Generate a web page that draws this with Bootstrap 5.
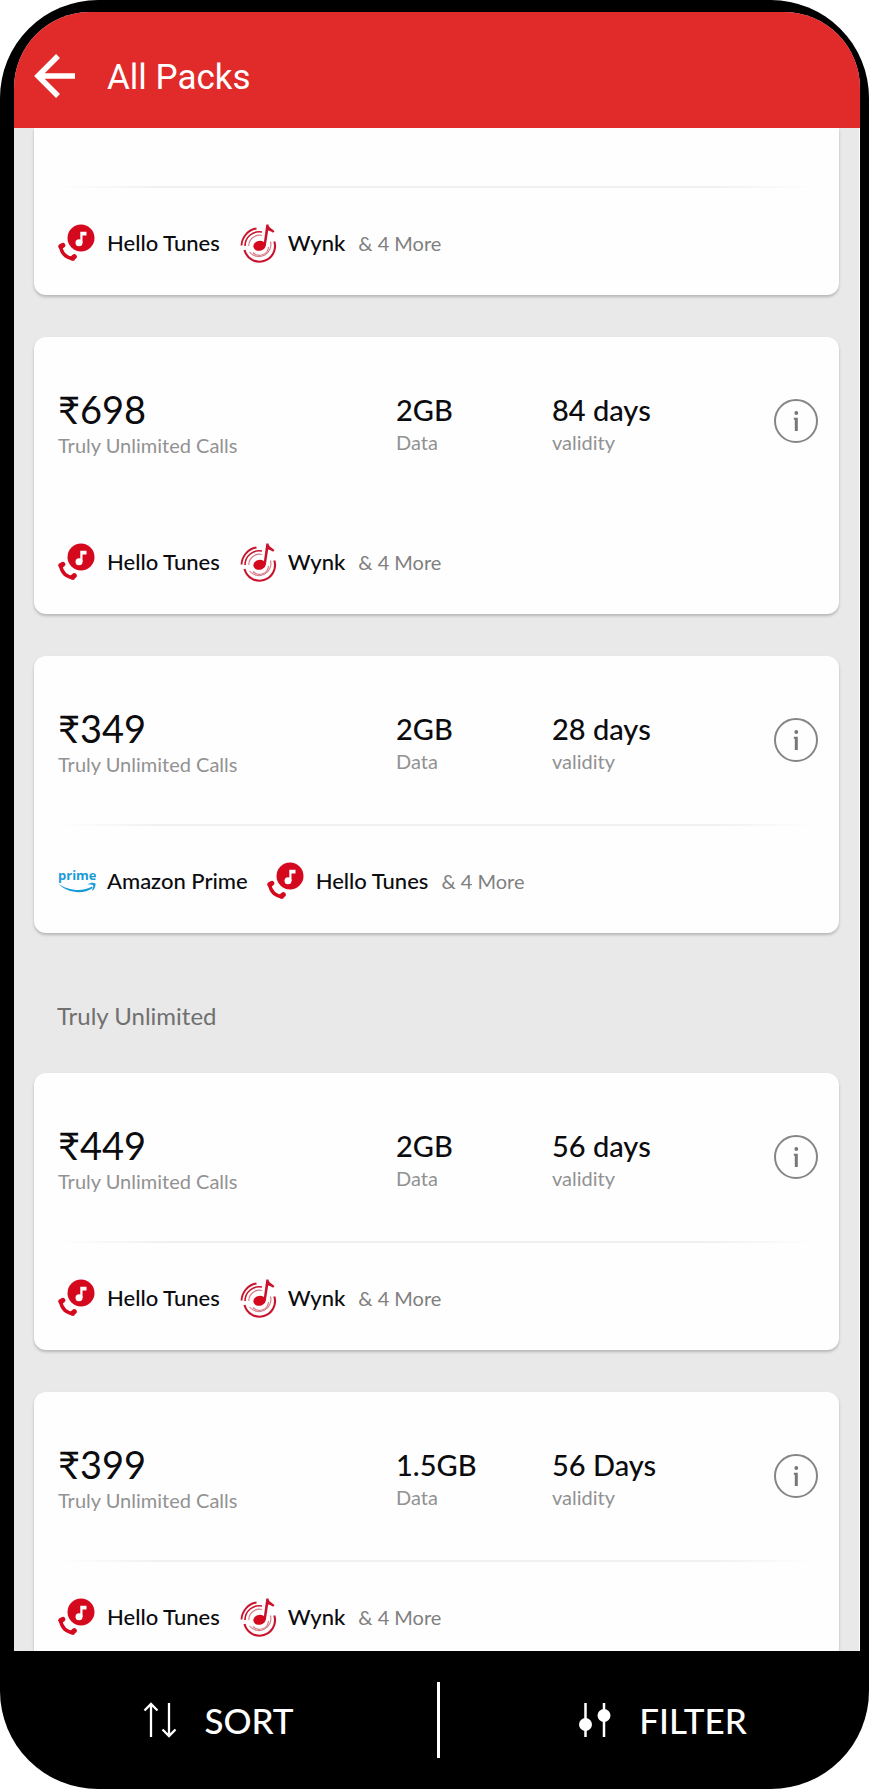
<!DOCTYPE html>
<html lang="en">
<head>
<meta charset="utf-8">
<meta name="viewport" content="width=device-width, initial-scale=1">
<title>All Packs</title>
<link href="https://cdn.jsdelivr.net/npm/bootstrap@5.3.0/dist/css/bootstrap.min.css" rel="stylesheet">
<style>
  body { background: #fff; font-family: Lato, "Liberation Sans", sans-serif; color: #0c0c0f; }
  .phone { height: 100vh; background: #000; border-radius: 98px; overflow: hidden; }
  .screen { min-height: 0; margin: 12px 9px 0 14px; border-radius: 76px 76px 0 0; background: #e9e9e9; overflow: hidden; }
  .topbar { background: #e12a2a; height: 116px; padding: 12px 20px 0 20px; gap: 31px; }
  .topbar h1 { font: 400 35px/44px Roboto, sans-serif; color: #fff; padding-top: 4px; }
  .back { width: 42px; height: 46px; }
  .packs { min-height: 0; padding: 0 20px; gap: 42px; overflow-y: auto; scrollbar-width: none; border-right: 1px solid #fff; }
  .packs::-webkit-scrollbar { display: none; }
  .pack { flex: none; background: #fefefe; border-radius: 12px; box-shadow: 0 2px 3px rgba(0,0,0,.22); }
  .pack-cut { border-radius: 0 0 12px 12px; padding-top: 58px; }
  .plan { display: grid; grid-template-columns: 338fr 156fr 222fr 44px; height: 168px; padding: 50px 21px 0 24px; }
  .price { font-size: 38px; line-height: 44px; }
  .value { font-size: 29px; line-height: 36px; padding-top: 5px; font-weight: 500; }
  .note { font-size: 20px; line-height: 28px; color: #929292; }
  .info { width: 44px; height: 44px; margin-top: 12px; }
  .rule { height: 2px; margin: 0 24px; background: linear-gradient(90deg, transparent, #f0f0f0 14%, #f0f0f0 86%, transparent); }
  .rule-none { background: none; }
  .perks { height: 107px; padding: 3px 24px 0; gap: 19px; font-size: 22px; line-height: 28px; font-weight: 500; }
  .perk { gap: 11px; }
  .perk svg { width: 38px; height: 40px; }
  .more { color: #808080; font-size: 20px; font-weight: 400; margin-left: -6px; }
  .group-title { font-size: 24px; line-height: 30px; color: #707070; padding: 26px 0 0 23px; }
  .actions { height: 138px; display: grid; grid-template-columns: 437fr 3px 429fr; align-items: center; }
  .actions button { font-size: 35px; line-height: 44px; font-weight: 500; color: #fff; gap: 27px; }
  .actions .filter { padding: 0 0 0 16px; }
  .split { height: 76px; background: #fff; }
</style>
</head>
<body>
<svg class="d-none" aria-hidden="true">
  <symbol id="tunes" viewBox="0 0 38 40">
    <circle cx="23" cy="15" r="13.500" fill="#d5091d"/>
    <path d="M22.300 20V8.800h6.200v3.600h-4V20z" fill="#fff"/><circle cx="21" cy="19.800" r="3.500" fill="#fff"/>
    <path d="M2.500 23C3.500 30.500 8.500 35.200 16.500 36" fill="none" stroke="#d5091d" stroke-width="3.400"/>
    <path d="M2.800 23.500l2-1.200M14.500 35.200l1.800-1.600" fill="none" stroke="#d5091d" stroke-width="5" stroke-linecap="round"/>
  </symbol>
  <symbol id="wynk" viewBox="0 0 38 40">
    <g fill="none" stroke="#c9122b">
      <path d="M2.500 22.500A18 18 0 0 1 17.500 5.500" stroke-width="1.900"/>
      <path d="M35.300 18.500A15.500 15.500 0 1 1 5.500 27" stroke-width="2.100"/>
      <path d="M6 23A14.300 14.300 0 0 1 23 9" stroke-width="1.600"/>
      <path d="M31.500 18.500A12 12 0 0 1 10.500 29" stroke-width="1.200" stroke="#d8808b"/>
      <path d="M9.800 23A10.800 10.800 0 0 1 23 12.500" stroke-width="1.200" stroke="#d8808b"/>
      <path d="M29.500 24A9 9 0 0 1 14 29.500" stroke-width="1.200" stroke="#d8808b"/>
    </g>
    <path d="M24.500 22L27.300 1.500h2.200c.3 3.500 3.500 3.800 6 6.800l-1.500 1.500c-2-1.500-3.500-2-4.800-2.300L26.800 23z" fill="#c9122b"/>
    <ellipse cx="20.500" cy="22.800" rx="6.200" ry="5" fill="#d5091d" transform="rotate(-12 20.500 22.800)"/>
  </symbol>
  <symbol id="prime" viewBox="0 0 38 40">
    <text x="0" y="19" font-family="Open Sans, sans-serif" font-weight="700" font-size="13" fill="#1a9bd7">prime</text>
    <path d="M0 22.500C10 30 25 31 34 25.500l.8 1.500C25 34 9 32 0 22.500zM29.500 23.500c3-2.200 6.500-2 8-1 .2 3-.8 5.500-2.800 7.200l-.6-.6c1-2 1.500-3.800 1-4.800-1.200-.8-3.200-.8-5.600-.8z" fill="#1a9bd7"/>
  </symbol>
  <symbol id="info" viewBox="0 0 44 44">
    <circle cx="22" cy="22" r="21" fill="none" stroke="#858585" stroke-width="2"/>
    <circle cx="22.300" cy="14" r="1.900" fill="#777"/><path d="M19.800 18.800h4V32h-3V20.800h-1z" fill="#777"/>
  </symbol>
</svg>

<div class="phone d-flex flex-column">
  <div class="screen d-flex flex-column flex-grow-1">
    <header class="topbar d-flex align-items-center flex-shrink-0">
      <button class="btn p-0 border-0 d-flex" type="button" aria-label="Back">
        <svg class="back" viewBox="0 0 42 46" fill="none" stroke="#fff" stroke-width="5.500"><path d="M24 3L4 23l20 20M4 23h37"/></svg>
      </button>
      <h1 class="m-0">All Packs</h1>
    </header>

    <main class="packs d-flex flex-column flex-grow-1">
      <article class="pack pack-cut">
        <div class="rule"></div>
        <div class="perks d-flex align-items-center">
          <span class="perk d-flex align-items-center"><svg><use href="#tunes"/></svg>Hello Tunes</span>
          <span class="perk d-flex align-items-center"><svg><use href="#wynk"/></svg>Wynk</span>
          <span class="more">&amp; 4 More</span>
        </div>
      </article>

      <article class="pack">
        <div class="plan">
          <div><div class="price">₹698</div><div class="note">Truly Unlimited Calls</div></div>
          <div><div class="value">2GB</div><div class="note">Data</div></div>
          <div><div class="value">84 days</div><div class="note">validity</div></div>
          <button class="info btn p-0 border-0 d-flex" type="button" aria-label="Pack details"><svg width="44" height="44"><use href="#info"/></svg></button>
        </div>
        <div class="rule rule-none"></div>
        <div class="perks d-flex align-items-center">
          <span class="perk d-flex align-items-center"><svg><use href="#tunes"/></svg>Hello Tunes</span>
          <span class="perk d-flex align-items-center"><svg><use href="#wynk"/></svg>Wynk</span>
          <span class="more">&amp; 4 More</span>
        </div>
      </article>

      <article class="pack">
        <div class="plan">
          <div><div class="price">₹349</div><div class="note">Truly Unlimited Calls</div></div>
          <div><div class="value">2GB</div><div class="note">Data</div></div>
          <div><div class="value">28 days</div><div class="note">validity</div></div>
          <button class="info btn p-0 border-0 d-flex" type="button" aria-label="Pack details"><svg width="44" height="44"><use href="#info"/></svg></button>
        </div>
        <div class="rule"></div>
        <div class="perks d-flex align-items-center">
          <span class="perk d-flex align-items-center"><svg><use href="#prime"/></svg>Amazon Prime</span>
          <span class="perk d-flex align-items-center"><svg><use href="#tunes"/></svg>Hello Tunes</span>
          <span class="more">&amp; 4 More</span>
        </div>
      </article>

      <h2 class="group-title m-0 fw-normal">Truly Unlimited</h2>

      <article class="pack">
        <div class="plan">
          <div><div class="price">₹449</div><div class="note">Truly Unlimited Calls</div></div>
          <div><div class="value">2GB</div><div class="note">Data</div></div>
          <div><div class="value">56 days</div><div class="note">validity</div></div>
          <button class="info btn p-0 border-0 d-flex" type="button" aria-label="Pack details"><svg width="44" height="44"><use href="#info"/></svg></button>
        </div>
        <div class="rule"></div>
        <div class="perks d-flex align-items-center">
          <span class="perk d-flex align-items-center"><svg><use href="#tunes"/></svg>Hello Tunes</span>
          <span class="perk d-flex align-items-center"><svg><use href="#wynk"/></svg>Wynk</span>
          <span class="more">&amp; 4 More</span>
        </div>
      </article>

      <article class="pack">
        <div class="plan">
          <div><div class="price">₹399</div><div class="note">Truly Unlimited Calls</div></div>
          <div><div class="value">1.5GB</div><div class="note">Data</div></div>
          <div><div class="value">56 Days</div><div class="note">validity</div></div>
          <button class="info btn p-0 border-0 d-flex" type="button" aria-label="Pack details"><svg width="44" height="44"><use href="#info"/></svg></button>
        </div>
        <div class="rule"></div>
        <div class="perks d-flex align-items-center">
          <span class="perk d-flex align-items-center"><svg><use href="#tunes"/></svg>Hello Tunes</span>
          <span class="perk d-flex align-items-center"><svg><use href="#wynk"/></svg>Wynk</span>
          <span class="more">&amp; 4 More</span>
        </div>
      </article>
    </main>
  </div>

  <footer class="actions flex-shrink-0">
    <button class="btn border-0 p-0 d-flex align-items-center justify-content-center" type="button">
      <svg width="34" height="36" viewBox="0 0 34 36" fill="none" stroke="#fff" stroke-width="2.300"><path d="M8 35V2M1.500 8.500L8 2l6.500 6.500M26 1v33M19.500 27.500L26 34l6.500-6.500"/></svg>
      SORT
    </button>
    <div class="split"></div>
    <button class="btn filter border-0 d-flex align-items-center justify-content-center" type="button">
      <svg width="34" height="36" viewBox="0 0 34 36" fill="#fff" stroke="#fff" stroke-width="2.500"><path d="M7.500 1v34M26 1v34"/><g stroke="none"><circle cx="7.500" cy="22.500" r="6.500"/><circle cx="26" cy="13.500" r="6.500"/></g></svg>
      FILTER
    </button>
  </footer>
</div>
<script src="https://cdn.jsdelivr.net/npm/bootstrap@5.3.0/dist/js/bootstrap.bundle.min.js"></script>
</body>
</html>
